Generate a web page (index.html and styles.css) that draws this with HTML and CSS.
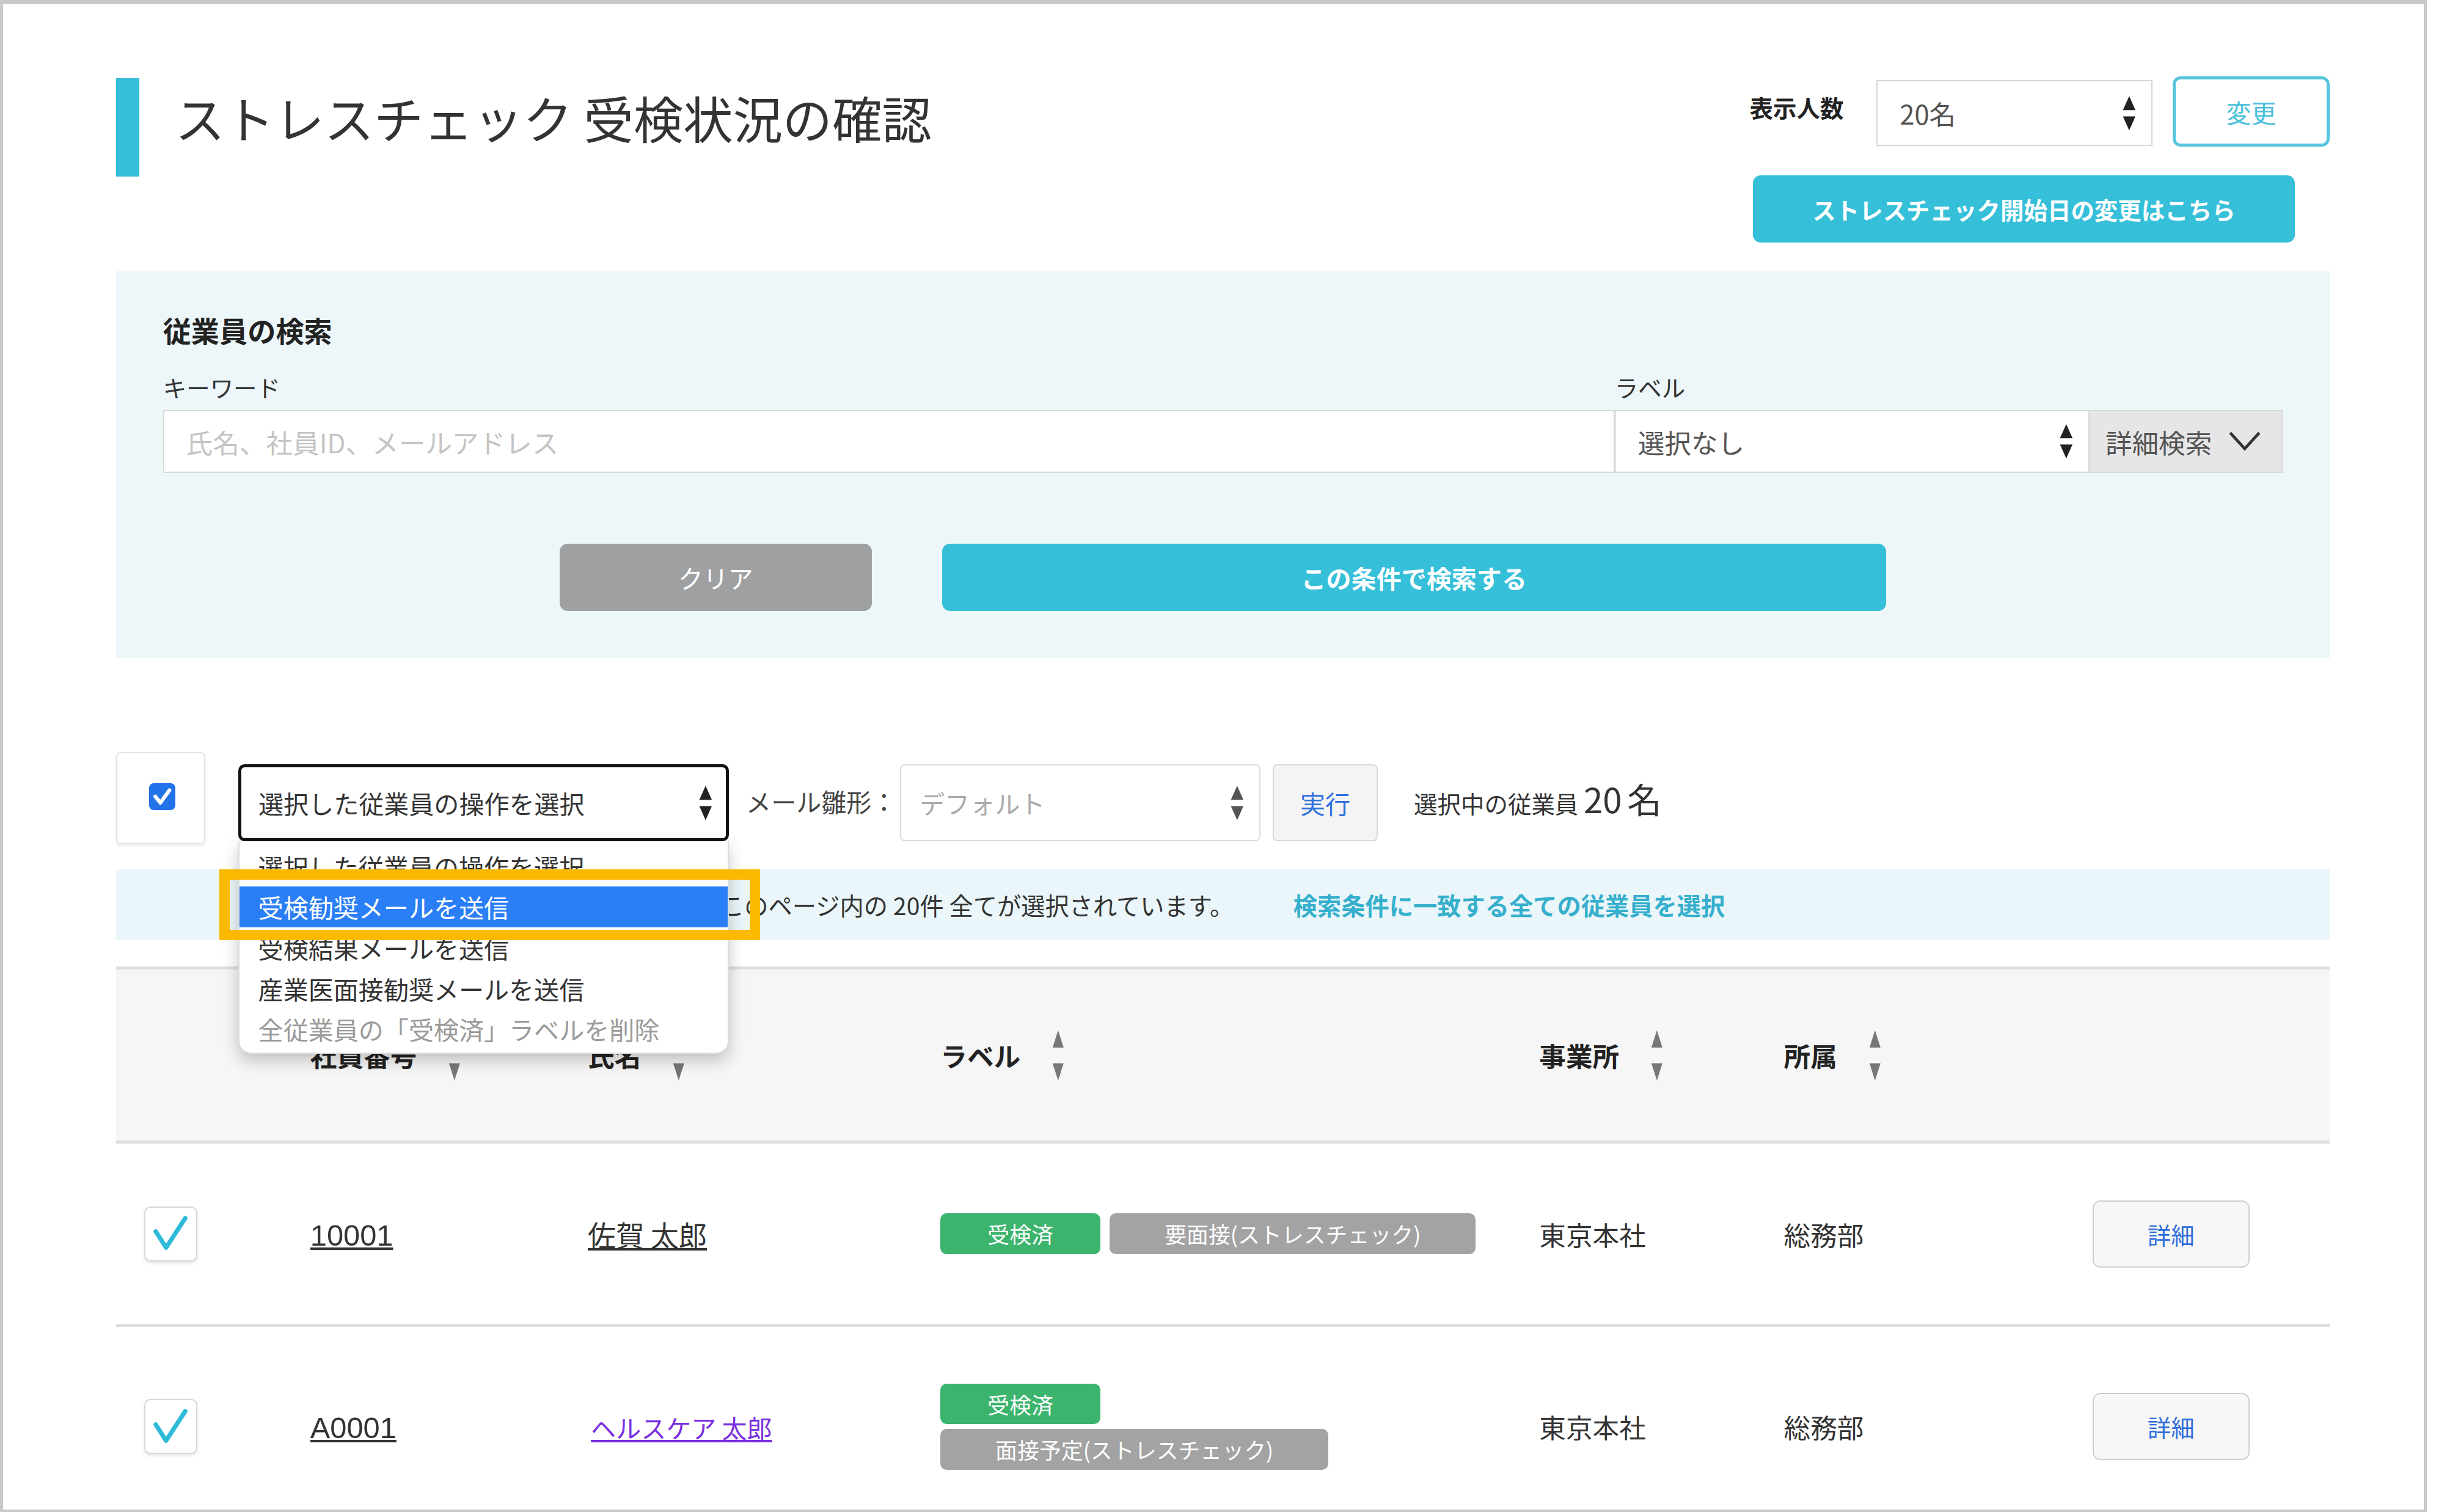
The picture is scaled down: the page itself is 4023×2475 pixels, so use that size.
FILE: index.html
```html
<!DOCTYPE html>
<html lang="ja">
<head>
  <meta charset="UTF-8">
  <meta name="viewport" content="width=device-width, initial-scale=1.0">
  <title>ストレスチェック 受検状況の確認</title>
  <link rel="stylesheet" href="styles.css">
</head>
<body>
  <div class="frame">
    <div class="page">

      <header class="page-head">
        <h1 class="page-title">ストレスチェック 受検状況の確認</h1>
        <div class="head-tools">
          <div class="per-page">
            <span class="per-page-label">表示人数</span>
            <div class="select select-count">
              <span>20名</span>
              <svg class="updown" viewBox="0 0 10 26" width="10" height="26"><path d="M1 11 5 2 9 11Z M1 15 9 15 5 24Z" fill="#222"/></svg>
            </div>
            <button class="btn-outline">変更</button>
          </div>
          <button class="btn-teal btn-start">ストレスチェック開始日の変更はこちら</button>
        </div>
      </header>

      <section class="search-panel">
        <h2>従業員の検索</h2>
        <div class="search-fields">
          <div class="field field-keyword">
            <label>キーワード</label>
            <input type="text" placeholder="氏名、社員ID、メールアドレス">
          </div>
          <div class="field field-label">
            <label>ラベル</label>
            <div class="label-row">
              <div class="select select-label">
                <span>選択なし</span>
                <svg class="updown" viewBox="0 0 10 26" width="10" height="26"><path d="M1 11 5 2 9 11Z M1 15 9 15 5 24Z" fill="#222"/></svg>
              </div>
              <div class="detail-toggle">
                <span>詳細検索</span>
                <svg viewBox="0 0 22 14" width="21" height="13"><path d="M1 1 11 12 21 1" stroke="#333" stroke-width="2" fill="none"/></svg>
              </div>
            </div>
          </div>
        </div>
        <div class="search-actions">
          <button class="btn-clear">クリア</button>
          <button class="btn-teal btn-search">この条件で検索する</button>
        </div>
      </section>

      <div class="bulk-bar">
        <div class="check-all">
          <span class="cb-blue"><svg viewBox="0 0 17 17" width="17" height="17"><path d="M4 8.5 7.2 12.5 13 4.5" stroke="#fff" stroke-width="2.4" fill="none" stroke-linecap="round" stroke-linejoin="round"/></svg></span>
        </div>
        <div class="op-select-wrap">
          <div class="select select-op">
            <span>選択した従業員の操作を選択</span>
            <svg class="updown" viewBox="0 0 10 26" width="10" height="26"><path d="M1 11 5 2 9 11Z M1 15 9 15 5 24Z" fill="#222"/></svg>
          </div>
          <ul class="op-menu">
            <li>選択した従業員の操作を選択</li>
            <li class="active">受検勧奨メールを送信</li>
            <li>受検結果メールを送信</li>
            <li>産業医面接勧奨メールを送信</li>
            <li class="disabled">全従業員の「受検済」ラベルを削除</li>
          </ul>
          <div class="callout"></div>
        </div>
        <span class="mail-label">メール雛形：</span>
        <div class="select select-template">
          <span>デフォルト</span>
          <svg class="updown" viewBox="0 0 10 26" width="10" height="26"><path d="M1 11 5 2 9 11Z M1 15 9 15 5 24Z" fill="#555"/></svg>
        </div>
        <button class="btn-run">実行</button>
        <span class="selected-count">選択中の従業員 <b>20</b> <b>名</b></span>
      </div>

      <div class="select-info">
        <span>このページ内の 20件 全てが選択されています。</span>
        <a href="#">検索条件に一致する全ての従業員を選択</a>
      </div>

      <div class="emp-table">
        <div class="emp-row emp-head">
          <div></div>
          <div class="sort">社員番号 <svg viewBox="0 0 10 34" width="10" height="34"><path d="M1.5 12 5 1 8.5 12Z M1.5 22 8.5 22 5 33Z" fill="#777"/></svg></div>
          <div class="sort">氏名 <svg viewBox="0 0 10 34" width="10" height="34"><path d="M1.5 12 5 1 8.5 12Z M1.5 22 8.5 22 5 33Z" fill="#777"/></svg></div>
          <div class="sort">ラベル <svg viewBox="0 0 10 34" width="10" height="34"><path d="M1.5 12 5 1 8.5 12Z M1.5 22 8.5 22 5 33Z" fill="#777"/></svg></div>
          <div class="sort">事業所 <svg viewBox="0 0 10 34" width="10" height="34"><path d="M1.5 12 5 1 8.5 12Z M1.5 22 8.5 22 5 33Z" fill="#777"/></svg></div>
          <div class="sort">所属 <svg viewBox="0 0 10 34" width="10" height="34"><path d="M1.5 12 5 1 8.5 12Z M1.5 22 8.5 22 5 33Z" fill="#777"/></svg></div>
          <div></div>
        </div>

        <div class="emp-row">
          <div><span class="row-check"><svg viewBox="0 0 34 35" width="32" height="33"><path d="M7 16 14 27 27 7" stroke="#2dbbd9" stroke-width="3" fill="none" stroke-linecap="round" stroke-linejoin="round"/></svg></span></div>
          <div><a class="emp-id" href="#">10001</a></div>
          <div><a class="emp-name" href="#">佐賀 太郎</a></div>
          <div class="badges">
            <span class="badge badge-done">受検済</span>
            <span class="badge badge-gray">要面接(ストレスチェック)</span>
          </div>
          <div>東京本社</div>
          <div>総務部</div>
          <div><button class="btn-detail">詳細</button></div>
        </div>

        <div class="emp-row">
          <div><span class="row-check"><svg viewBox="0 0 34 35" width="32" height="33"><path d="M7 16 14 27 27 7" stroke="#2dbbd9" stroke-width="3" fill="none" stroke-linecap="round" stroke-linejoin="round"/></svg></span></div>
          <div><a class="emp-id" href="#">A0001</a></div>
          <div><a class="emp-name visited" href="#">ヘルスケア 太郎</a></div>
          <div class="badges">
            <span class="badge badge-done">受検済</span>
            <span class="badge badge-gray">面接予定(ストレスチェック)</span>
          </div>
          <div>東京本社</div>
          <div>総務部</div>
          <div><button class="btn-detail">詳細</button></div>
        </div>
      </div>

    </div>
  </div>
</body>
</html>
```

FILE: styles.css
```css
html {
  zoom: 2.5657;
}
body {
  margin: 0;
  background: #fff;
  font-family: "Noto Sans CJK JP", "Noto Sans", sans-serif;
  color: #333;
}
button {
  font-family: inherit;
  cursor: pointer;
}
.frame {
  width: 1548px;
  height: 965px;
  box-sizing: border-box;
  border: 2px solid #c9c9c9;
  border-top-width: 3px;
  overflow: hidden;
  background: #fff;
}
.page {
  padding: 46px 60px 0 72px;
}

/* header */
.page-head {
  display: flex;
  justify-content: space-between;
  align-items: flex-start;
}
.page-title {
  margin: 1px 0 0;
  height: 63px;
  box-sizing: border-box;
  border-left: 15px solid #36bdd7;
  padding: 9px 0 0 23px;
  font-size: 31.7px;
  font-weight: 400;
  line-height: 1;
  color: #333;
}
.head-tools {
  display: flex;
  flex-direction: column;
  align-items: flex-end;
  gap: 18px;
}
.per-page {
  display: flex;
  align-items: center;
}
.per-page-label {
  font-size: 15px;
  font-weight: 700;
  color: #222;
  margin: 0 21px 6px 0;
}
.select {
  display: flex;
  align-items: center;
  justify-content: space-between;
  box-sizing: border-box;
  background: #fff;
  border: 1px solid #d6d6d6;
  padding: 0 9px 0 14px;
  font-size: 17px;
  color: #555;
  white-space: nowrap;
}
.select-count {
  width: 176px;
  height: 42px;
  margin-top: 2px;
}
.btn-outline {
  width: 100px;
  height: 45px;
  margin-left: 13px;
  border: 2px solid #55c5dd;
  border-radius: 5px;
  background: #fff;
  color: #4cc0da;
  font-size: 16px;
}
.btn-teal {
  background: #36bfd9;
  color: #fff;
  border: 0;
  border-radius: 5px;
  font-weight: 700;
  font-size: 15px;
}
.btn-start {
  width: 346px;
  height: 43px;
  margin-right: 22px;
}

/* search */
.search-panel {
  margin-top: 18px;
  background: #edf7fa;
  padding: 25px 30px 30px;
}
.search-panel h2 {
  margin: 0;
  font-size: 18px;
  font-weight: 700;
  line-height: 26px;
  color: #222;
}
.search-fields {
  display: flex;
  margin-top: 12px;
}
.field label {
  display: block;
  font-size: 15px;
  line-height: 22px;
  margin-bottom: 4px;
  color: #333;
}
.field-keyword {
  flex: 1;
}
.field-keyword input {
  display: block;
  width: 100%;
  height: 40px;
  box-sizing: border-box;
  border: 1px solid #d9d9d9;
  padding: 0 14px;
  font-size: 17px;
  font-family: inherit;
  outline: none;
}
.field-keyword input::placeholder {
  color: #c4c4c4;
}
.field-label {
  width: 426px;
}
.label-row {
  display: flex;
  height: 40px;
}
.select-label {
  flex: 1;
  height: 40px;
  border-left-color: #e2e2e2;
}
.detail-toggle {
  width: 123px;
  box-sizing: border-box;
  background: #e6e6e6;
  border: 1px solid #d9d9d9;
  border-left: 0;
  display: flex;
  align-items: center;
  justify-content: space-between;
  padding: 0 13px 0 10px;
  font-size: 17px;
  color: #555;
}
.search-actions {
  display: flex;
  justify-content: center;
  gap: 45px;
  margin-top: 45px;
}
.btn-clear {
  width: 199px;
  height: 43px;
  background: #9fa0a2;
  color: #fff;
  border: 0;
  border-radius: 5px;
  font-size: 16px;
}
.btn-search {
  width: 602px;
  height: 43px;
  font-size: 16px;
}

/* bulk operations */
.bulk-bar {
  display: flex;
  align-items: flex-start;
  margin-top: 60px;
  height: 59px;
}
.check-all {
  width: 57px;
  height: 59px;
  box-sizing: border-box;
  border: 1px solid #e3e3e3;
  border-radius: 3px;
  box-shadow: 0 1px 2px rgba(0,0,0,0.08);
  display: flex;
  align-items: center;
  justify-content: center;
  padding: 0 0 2px 2px;
}
.cb-blue {
  display: flex;
  width: 17px;
  height: 17px;
  background: #2272ea;
  border-radius: 3px;
}
.op-select-wrap {
  position: relative;
  margin: 8px 0 0 21px;
}
.select-op {
  width: 313px;
  height: 49px;
  border: 2px solid #111;
  border-radius: 4px;
  padding: 0 8px 0 11px;
  font-size: 16px;
  color: #333;
}
.op-menu {
  position: absolute;
  top: 49px;
  left: 0;
  width: 313px;
  box-sizing: border-box;
  margin: 0;
  padding: 3px 0 2px;
  list-style: none;
  background: #fff;
  border: 1px solid #dcdcdc;
  border-top: 0;
  border-radius: 0 0 8px 8px;
  box-shadow: 0 4px 10px rgba(0,0,0,0.22);
  z-index: 5;
  font-size: 16px;
}
.op-menu li {
  height: 26px;
  line-height: 26px;
  padding-left: 12px;
  color: #333;
  white-space: nowrap;
}
.op-menu li.active {
  background: #2b7ff6;
  color: #fff;
}
.op-menu li.disabled {
  color: #9a9a9a;
}
.callout {
  position: absolute;
  left: -12px;
  top: 67px;
  width: 345px;
  height: 45px;
  box-sizing: border-box;
  border: 7px solid #fbb900;
  z-index: 6;
  pointer-events: none;
}
.mail-label {
  margin: 8px 0 0 11px;
  line-height: 47px;
  font-size: 16px;
  color: #444;
}
.select-template {
  width: 230px;
  height: 49px;
  margin: 8px 0 0 2px;
  border-color: #ddd;
  border-radius: 3px;
  padding: 0 9px 0 12px;
  font-size: 16px;
  color: #aaa;
}
.btn-run {
  width: 67px;
  height: 49px;
  margin: 8px 0 0 8px;
  background: #f4f4f4;
  border: 1px solid #d9d9d9;
  border-radius: 3px;
  color: #2f6fdc;
  font-size: 16px;
}
.selected-count {
  margin: 8px 0 0 23px;
  line-height: 44px;
  font-size: 15px;
  color: #333;
}
.selected-count b {
  font-size: 22px;
  font-weight: 400;
}

.select-info {
  margin-top: 16px;
  height: 45px;
  background: #eaf6f9;
  display: flex;
  align-items: center;
  justify-content: center;
  gap: 38px;
  font-size: 15.3px;
  color: #333;
}
.select-info a {
  color: #36afcd;
  font-weight: 700;
  text-decoration: none;
}

/* table */
.emp-table {
  margin-top: 17px;
}
.emp-row {
  display: grid;
  grid-template-columns: 124px 177px 225px 382px 156px 197px 151px;
  align-items: center;
  min-height: 116px;
  box-sizing: border-box;
  padding: 36px 0;
  border-bottom: 2px solid #dedede;
  font-size: 17px;
  color: #333;
}
.emp-head {
  min-height: 113px;
  padding: 0;
  background: #f6f6f6;
  border-top: 2px solid #dedede;
  font-weight: 700;
  color: #222;
}
.sort {
  display: flex;
  align-items: center;
  gap: 19px;
}
.row-check {
  display: flex;
  align-items: center;
  justify-content: center;
  width: 34px;
  height: 35px;
  margin-left: 18px;
  box-sizing: border-box;
  border: 1px solid #d8d8d8;
  border-radius: 4px;
  box-shadow: 0 1px 2px rgba(0,0,0,0.1);
}
.emp-id {
  font-family: "Liberation Sans", sans-serif;
  font-size: 19px;
  color: #333;
}
.emp-name {
  font-size: 18px;
  color: #333;
}
.emp-name.visited {
  margin-left: 2px;
  font-size: 16px;
  color: #7a2fe0;
}
.badges {
  display: flex;
  flex-wrap: wrap;
  gap: 3px 6px;
  max-width: 345px;
}
.badge {
  height: 26px;
  line-height: 26px;
  border-radius: 4px;
  color: #fff;
  font-size: 14px;
  white-space: nowrap;
}
.badge-done {
  width: 102px;
  text-align: center;
  background: #3cb46e;
}
.badge-gray {
  padding: 0 35px;
  background: #a3a3a3;
}
.btn-detail {
  width: 100px;
  height: 43px;
  background: #f7f7f7;
  border: 1px solid #cfcfcf;
  border-radius: 5px;
  color: #2f6fdc;
  font-size: 15px;
}
```
